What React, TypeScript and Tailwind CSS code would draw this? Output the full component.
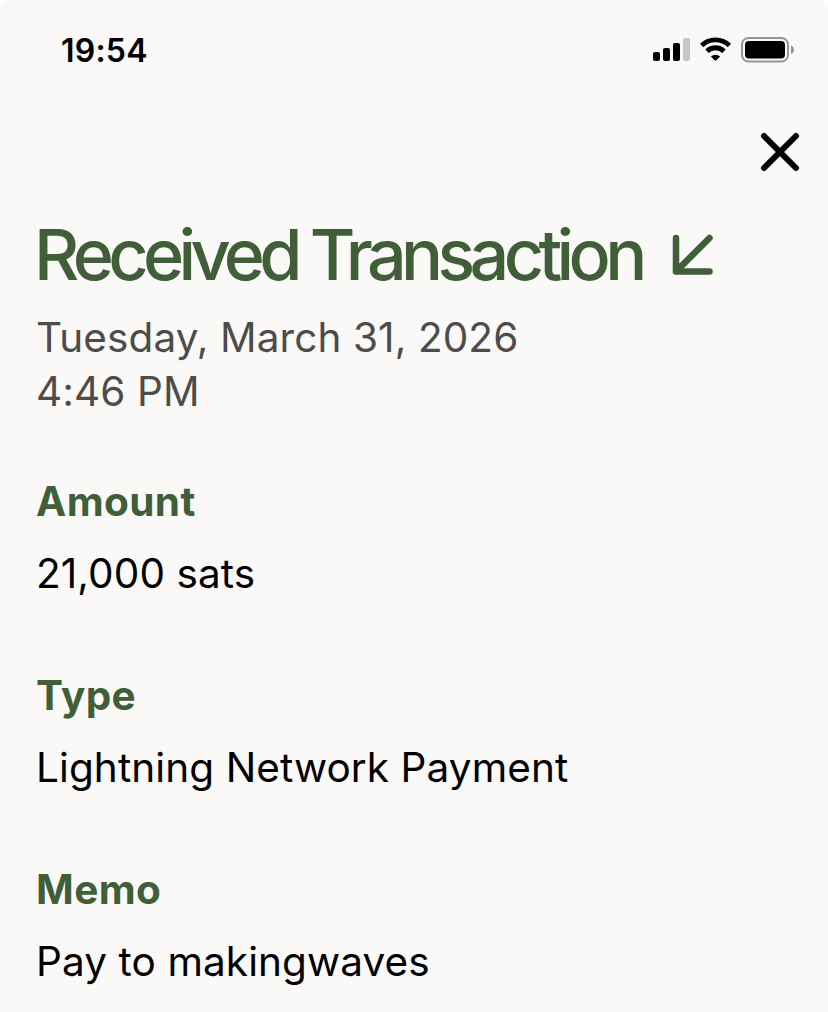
import React from 'react';

interface DetailProps {
  label: string;
  value: string;
}

const Detail: React.FC<DetailProps> = ({ label, value }) => {
  return (
    <section className="flex flex-col gap-4">
      <h2 className="text-[40.5px] leading-[56px] font-bold tracking-[0.4px] text-[#405e37]">{label}</h2>
      <p className="text-[40.5px] leading-[56px] tracking-[0.1px] text-black">{value}</p>
    </section>
  );
};

const StatusBar: React.FC = () => {
  return (
    <header className="flex h-[100px] items-center justify-between pl-[61px] pr-[34px] text-black">
      <span className="pt-0.5 text-[32px] leading-10 font-semibold tracking-[0.2px]">19:54</span>
      <div className="flex items-center gap-[10px]">
        <svg className="h-[26px] w-[37px]" viewBox="0 0 37 26" fill="currentColor">
          <rect x="0" y="15" width="7" height="9" rx="2" />
          <rect x="10" y="11" width="7" height="13" rx="2" />
          <rect x="20" y="6" width="7" height="18" rx="2" />
          <rect x="30" y="1" width="7" height="23" rx="2" opacity="0.2" />
        </svg>
        <svg className="h-[26px] w-[31px]" viewBox="0 0 31 26" fill="currentColor">
          <path d="M15.500 24l4.600-4.600a7 7 0 0 0-9.200 0z" />
          <path d="M1.600 8.500a20 20 0 0 1 27.800 0M7 14.200a12.200 12.200 0 0 1 17 0" fill="none" stroke="currentColor" strokeWidth="4.800" />
        </svg>
        <svg className="h-[26px] w-[53px]" viewBox="0 0 53 26" fill="currentColor">
          <rect x="1" y="1" width="46" height="23.500" rx="6.500" fill="none" stroke="currentColor" strokeWidth="2" opacity="0.4" />
          <rect x="4" y="4" width="40" height="17.500" rx="4" />
          <path d="M50 8.500v8.500q3-1 3-4.250t-3-4.250z" opacity="0.4" />
        </svg>
      </div>
    </header>
  );
};

const App: React.FC = () => {
  return (
    <main className="h-[1012px] w-[828px] overflow-hidden rounded-t-lg bg-[#fbf9f8] font-['Inter',sans-serif]">
      <StatusBar />
      <div className="flex h-[104px] items-center justify-end pr-[28px]">
        <button aria-label="Close">
          <svg className="h-10 w-10" viewBox="0 0 40 40" fill="none" stroke="black" strokeWidth="6" strokeLinecap="round">
            <path d="M4 4l32 32M36 4L4 36" />
          </svg>
        </button>
      </div>
      <div className="flex h-[102px] items-center gap-[29px] pl-[34px] text-[#405e37]">
        <h1 className="text-[70px] leading-[100px] font-medium tracking-[-5.65px] whitespace-nowrap">Received Transaction</h1>
        <svg className="h-11 w-11" viewBox="0 0 44 44" fill="none" stroke="currentColor" strokeWidth="6.500" strokeLinecap="round" strokeLinejoin="round">
          <path d="M38.500 5L5 38.500M5 5v33.500h33.500" />
        </svg>
      </div>
      <div className="mt-[5px] pl-9 text-[40.5px] leading-[54px] tracking-[0.1px] text-[#4d4c4a]">
        <p>Tuesday, March 31, 2026</p>
        <p>4:46 PM</p>
      </div>
      <div className="mt-[55px] flex flex-col gap-[66px] pl-9">
        <Detail label="Amount" value="21,000 sats" />
        <Detail label="Type" value="Lightning Network Payment" />
        <Detail label="Memo" value="Pay to makingwaves" />
      </div>
    </main>
  );
};

export default App;
